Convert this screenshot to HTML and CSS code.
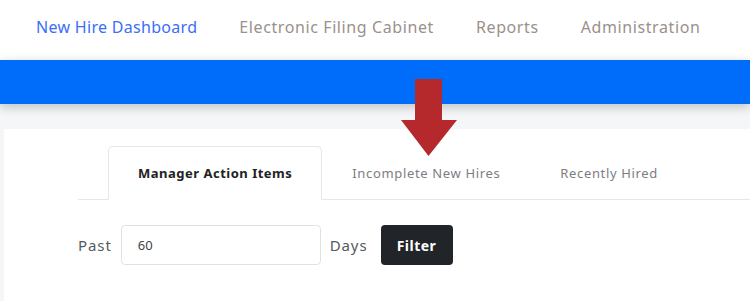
FILE: index.html
```html
<!DOCTYPE html>
<html>
<head>
<meta charset="utf-8">
<link rel="stylesheet" href="styles.css">
</head>
<body>
<nav class="topnav">
  <a class="nav-link active">New Hire Dashboard</a>
  <a class="nav-link">Electronic Filing Cabinet</a>
  <a class="nav-link">Reports</a>
  <a class="nav-link">Administration</a>
</nav>
<div class="bluebar"></div>
<main class="page">
  <section class="card">
    <ul class="tabs">
      <li class="tab active">Manager Action Items</li>
      <li class="tab">Incomplete New Hires</li>
      <li class="tab">Recently Hired</li>
    </ul>
    <form class="filter-row">
      <span class="label">Past</span>
      <input class="days-input" type="text" value="60">
      <span class="label">Days</span>
      <button class="btn-filter" type="button">Filter</button>
    </form>
  </section>
</main>
<svg class="arrow" width="56" height="78" viewBox="0 0 56 78">
  <path d="M14 0 H41 V41 H56 L27.5 77 L0 41 H14 Z" fill="#b5282b"/>
</svg>
</body>
</html>
```
FILE: styles.css
```css
* { box-sizing: border-box; }
html, body { margin: 0; padding: 0; }
body {
  font-family: "Noto Sans", "Liberation Sans", sans-serif;
  background: #f5f6f8;
  width: 750px;
  height: 301px;
  overflow: hidden;
  position: relative;
}
.topnav {
  height: 60px;
  background: #fff;
  display: flex;
  align-items: center;
  padding-left: 36px;
  gap: 42px;
}
.nav-link {
  font-size: 16px;
  color: #9a918c;
  letter-spacing: 0.6px;
  padding-bottom: 6px;
}
.nav-link.active { color: #3c6ef6; letter-spacing: 0.3px; }
.bluebar {
  height: 44px;
  background: #006dfa;
  box-shadow: 0 3px 10px rgba(0,0,0,0.22);
  position: relative;
  z-index: 1;
}
.page {
  padding-top: 25px;
  padding-left: 4px;
}
.card {
  background: #fff;
  height: 180px;
  padding-top: 17px;
  padding-left: 74px;
}
.tabs {
  list-style: none;
  margin: 0;
  padding: 0 0 0 30px;
  display: flex;
  border-bottom: 1px solid #e6e6e6;
  height: 54px;
}
.tab {
  font-size: 13px;
  color: #7d7d84;
  height: 54px;
  display: flex;
  align-items: center;
  justify-content: center;
  padding: 0 29px 1px;
  border: 1px solid transparent;
  border-radius: 5px 5px 0 0;
  letter-spacing: 0.65px;
}
.tab.active {
  color: #222;
  font-weight: 700;
  letter-spacing: 0.5px;
  border-color: #e6e6e6;
  border-bottom-color: #fff;
  margin-bottom: -1px;
  height: 54px;
}
.filter-row {
  display: flex;
  align-items: center;
  margin-top: 25px;
  gap: 9px;
}
.label {
  font-size: 15px;
  color: #555a60;
  letter-spacing: 0.9px;
}
.days-input {
  width: 200px;
  height: 40px;
  border: 1px solid #e2e2e2;
  border-radius: 4px;
  font-family: inherit;
  font-size: 13px;
  color: #444;
  padding: 0 16px;
}
.btn-filter {
  margin-left: 4px;
  width: 72px;
  height: 40px;
  border: none;
  border-radius: 4px;
  background: #212428;
  color: #fff;
  font-family: inherit;
  font-weight: 700;
  font-size: 14px;
  letter-spacing: 0.5px;
}
.arrow {
  position: absolute;
  left: 401px;
  top: 79px;
  z-index: 2;
}
```
